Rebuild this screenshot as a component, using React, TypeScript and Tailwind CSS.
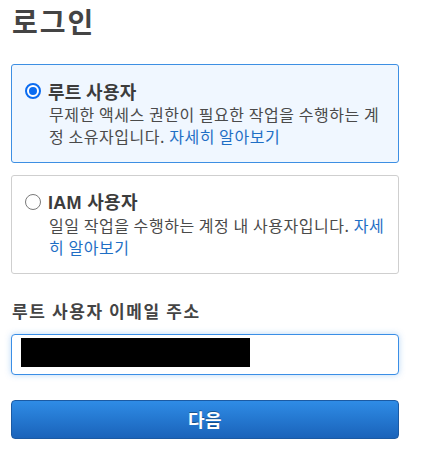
import React from 'react';

const font = { fontFamily: '"Noto Sans CJK KR", "Liberation Sans", sans-serif' };

function Radio({ checked }: { checked: boolean }) {
  if (checked) {
    return (
      <span className="w-4 h-4 rounded-full border-2 border-[#0b6cf0] bg-white flex items-center justify-center shrink-0">
        <span className="w-2 h-2 rounded-full bg-[#0b6cf0]"></span>
      </span>
    );
  }
  return <span className="w-4 h-4 rounded-full border border-[#7a7a7a] bg-white shrink-0"></span>;
}

function Option({ checked, title, children }: { checked: boolean; title: React.ReactNode; children: React.ReactNode }) {
  return (
    <div
      className={`rounded-[3px] border pl-[13px] pr-[12px] pt-[15px] pb-[14px] h-[99px] ${
        checked ? 'border-[#3d8fe3] bg-[#f0f7ff]' : 'border-[#cfcfcf] bg-white'
      }`}
    >
      <div className="flex items-center gap-[7px] h-[22px]">
        <Radio checked={checked} />
        <span className="text-[18px] font-bold leading-[22px] tracking-[0.3px] text-[#3c3c3c]">{title}</span>
      </div>
      <p className="pl-[24px] mt-[1px] text-[16px] leading-[22px] tracking-[0.55px] text-[#4a4a4a]">{children}</p>
    </div>
  );
}

export default function App() {
  return (
    <div className="min-h-screen bg-white px-[11px] w-[410px]" style={font}>
      <h1 className="pt-[4px] text-[28px] font-bold leading-[34px] tracking-[2px] text-[#444] pl-[1px]">로그인</h1>

      <div className="mt-[26px] flex flex-col gap-[12px]">
        <Option checked title="루트 사용자">
          무제한 액세스 권한이 필요한 작업을 수행하는 계정 소유자입니다.{' '}
          <span className="text-[#1f6fc5]">자세히 알아보기</span>
        </Option>
        <Option checked={false} title={<span style={{ fontFamily: '"Liberation Sans", "Noto Sans CJK KR", sans-serif' }}>IAM <span style={font}>사용자</span></span>}>
          일일 작업을 수행하는 계정 내 사용자입니다.{' '}
          <span className="text-[#1f6fc5]">자세히 알아보기</span>
        </Option>
      </div>

      <label className="block mt-[25px] pl-[1px] text-[17px] font-bold leading-[24px] tracking-[1.6px] text-[#444]">
        루트 사용자 이메일 주소
      </label>

      <div className="mt-[11px] h-[41px] rounded-[4px] border border-[#3a8ee6] bg-white shadow-[0_0_6px_rgba(58,142,230,0.35)] pl-[9px] pt-[3px]">
        <div className="w-[229px] h-[29px] bg-black"></div>
      </div>

      <button
        className="mt-[25px] w-full h-[39px] rounded-[4px] border border-[#1b5aa3] bg-gradient-to-b from-[#2f8ce6] to-[#1a63ba] text-white text-[18px] font-bold tracking-[0.5px] [text-shadow:0_-1px_0_rgba(0,0,0,0.35)]"
      >
        다음
      </button>
    </div>
  );
}
